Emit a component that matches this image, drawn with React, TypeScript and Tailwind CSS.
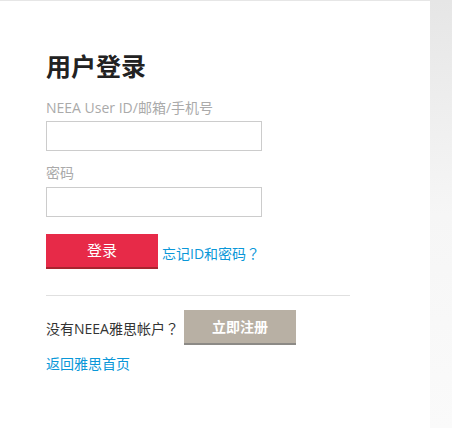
const FONT = "font-['Open_Sans','Noto_Sans_CJK_SC',sans-serif]";

// full-width question mark, centered in its em box like the original
function Q() {
  return <span className="font-['Noto_Sans_CJK_JP',sans-serif]">？</span>;
}

export default function App() {
  return (
    <div className={`flex h-[428px] w-[452px] bg-white ${FONT}`}>
      <div className="w-[430px] border-t border-[#e6e6e6] bg-white pl-[46px] pt-[50px]">
        <h1 className="text-[25px] font-bold leading-[30px] text-[#222]">用户登录</h1>

        <form className="mt-[17px] flex flex-col" onSubmit={(e) => e.preventDefault()}>
          <label className="text-[14px] leading-[20px] text-[#aaa]">NEEA User ID/邮箱/手机号</label>
          <input className="mt-[3px] h-[30px] w-[216px] border border-[#ccc] px-2 text-[14px] outline-none" />

          <label className="mt-[12px] text-[14px] leading-[20px] text-[#aaa]">密码</label>
          <input
            type="password"
            className="mt-[4px] h-[30px] w-[216px] border border-[#ccc] px-2 text-[14px] outline-none"
          />

          <div className="mt-[17px] flex items-end">
            <button
              type="submit"
              className="h-[35px] w-[112px] border-b-2 border-[#a8242f] bg-[#e72a48] text-[15px] leading-[33px] text-white"
            >
              登录
            </button>
            <a href="#" className="mb-[5px] ml-[4px] text-[14px] leading-[20px] text-[#0a97d8]">
              忘记ID和密码<Q />
            </a>
          </div>
        </form>

        <div className="mt-[26px] h-px w-[304px] bg-[#e0e0e0]" />

        <div className="mt-[14px] flex items-center">
          <span className="mt-[2px] text-[14px] leading-[20px] text-[#333]">
            没有NEEA雅思帐户<Q />
          </span>
          <button className="ml-[5px] h-[35px] w-[112px] border-b-2 border-[#8c8a86] bg-[#b8b0a4] text-[14px] font-bold leading-[33px] text-white">
            立即注册
          </button>
        </div>

        <a href="#" className="mt-[9px] block text-[14px] leading-[20px] text-[#0a97d8]">
          返回雅思首页
        </a>
      </div>
      <div className="flex-1 bg-gradient-to-b from-[#e6e6e6] via-[#f6f6f6] to-[#fafafa]" />
    </div>
  );
}
